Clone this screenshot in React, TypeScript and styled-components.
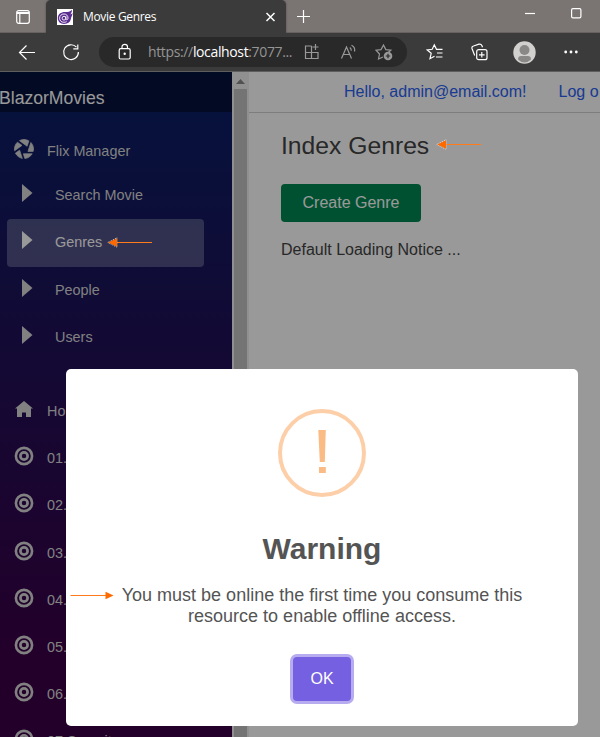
import React from "react";
import styled, { createGlobalStyle } from "styled-components";

const Global = createGlobalStyle`
  *, *::before, *::after { box-sizing: border-box; }
  body { margin: 0; overflow: hidden; font-family: "Liberation Sans", Arial, sans-serif; font-size: 16px; }
  h1, h2, p { margin: 0; font-weight: 400; }
  svg { display: block; flex: none; }
`;

const Window = styled.div`
  width: 600px;
  height: 737px;
  display: flex;
  flex-direction: column;
  overflow: hidden;
`;

const TitleBar = styled.header`
  height: 33px;
  flex: none;
  display: flex;
  background: #7a7473;
  border-bottom: 1px solid #676160;
`;

const TabMenu = styled.div`
  width: 46px;
  padding: 10px 0 0 16px;
`;

const Tab = styled.div`
  width: 240px;
  height: 33px;
  padding: 1px 8px 0 11px;
  display: flex;
  align-items: center;
  background: #3b3b3b;
  border-radius: 5px 5px 0 0;
  color: #fff;
  box-shadow: 0 0 2px #4a4646;
`;

const TabTitle = styled.span`
  flex: 1;
  margin-left: 10px;
  padding-bottom: 1px;
  font: 12px "Open Sans", "Noto Sans", sans-serif;
  letter-spacing: -0.33px;
`;

const NewTab = styled.div`
  padding: 10px 0 0 11px;
`;

const Controls = styled.div`
  margin-left: auto;
  padding: 8px 18px 0 0;
  display: flex;
  gap: 35px;
`;

const Toolbar = styled.div`
  height: 39px;
  flex: none;
  display: flex;
  align-items: center;
  padding-left: 18px;
  background: #3b3b3b;
  border-bottom: 1px solid #5e5e5e;
  color: #fff;
`;

const ToolIcon = styled.div<{ $gap: number }>`
  margin-left: ${(p) => p.$gap}px;
`;

const AddressBar = styled.div`
  width: 308px;
  height: 30px;
  margin-left: 19px;
  padding-left: 19px;
  display: flex;
  align-items: center;
  border-radius: 15px;
  background: #292929;
  color: #999;
`;

const Url = styled.span`
  width: 147px;
  margin-left: 16px;
  padding-bottom: 1px;
  font: 14px "Open Sans", "Noto Sans", sans-serif;
  letter-spacing: -0.36px;
  white-space: nowrap;
  color: #959595;
  b { font-weight: 400; color: #fff; }
`;

const Page = styled.div`
  position: relative;
  height: 665px;
  display: flex;
  background: #fff;
  overflow: hidden;
`;

const Sidebar = styled.aside`
  width: 232px;
  flex: none;
  overflow: hidden;
  background: linear-gradient(180deg, rgb(8, 32, 103) 0%, #3a0047 88%);
  color: #d7d7d7;
  font-size: 14.4px;
`;

const Brand = styled.div`
  height: 40px;
  padding-top: 16px;
  text-indent: -1px;
  background: rgba(0, 0, 0, 0.4);
  color: #fff;
  font-size: 17.6px;
  line-height: 20px;
`;

const NavGroup = styled.nav<{ $top: number }>`
  padding: ${(p) => p.$top}px 28px 0 7px;
`;

const NavItem = styled.a<{ $height?: number; $nested?: boolean; $active?: boolean }>`
  height: ${(p) => p.$height ?? 47}px;
  padding-left: ${(p) => (p.$nested ? 15 : 7)}px;
  padding-bottom: ${(p) => (p.$nested ? 2 : 0)}px;
  display: flex;
  align-items: center;
  white-space: nowrap;
  border-radius: 4px;
  color: ${(p) => (p.$active ? "#fff" : "#d7d7d7")};
  background: ${(p) => (p.$active ? "rgba(255,255,255,0.25)" : "transparent")};
  svg { margin-right: ${(p) => (p.$nested ? 22 : 13)}px; margin-top: -4px; }
`;

const ScrollTrack = styled.div`
  width: 17px;
  flex: none;
  display: flex;
  flex-direction: column;
  align-items: center;
  background: #f1f1f1;
  svg { margin: 7px 0 5px; }
`;

const Thumb = styled.div`
  width: 13px;
  flex: 1;
  background: #c1c1c1;
`;

const Main = styled.main`
  flex: 1;
  min-width: 0;
  overflow: hidden;
  color: #444;
`;

const TopRow = styled.div`
  height: 41px;
  padding-left: 95px;
  display: flex;
  align-items: center;
  gap: 32px;
  white-space: nowrap;
  border-bottom: 1px solid #d0d0d0;
  color: #2a62f4;
`;

const Content = styled.section`
  padding: 18px 0 0 32px;
`;

const Heading = styled.h1`
  font-size: 24.7px;
  line-height: 30px;
`;

const CreateButton = styled.button`
  width: 140px;
  height: 38px;
  display: block;
  margin: 23px 0 19px;
  border: 0;
  border-radius: 4px;
  background: #008852;
  color: #fff;
  font: inherit;
`;

const Backdrop = styled.div`
  position: absolute;
  inset: 0;
  background: rgba(0, 0, 0, 0.4);
`;

const Dialog = styled.div`
  position: absolute;
  left: 66px;
  top: 297px;
  width: 512px;
  height: 357px;
  padding-top: 40px;
  display: flex;
  flex-direction: column;
  align-items: center;
  border-radius: 5px;
  background: #fff;
  color: #545454;
  text-align: center;
`;

const DialogTitle = styled.h2`
  margin-top: 34px;
  font-size: 30px;
  font-weight: 700;
  line-height: 36px;
`;

const DialogText = styled.p`
  width: 430px;
  margin-top: 18px;
  font-size: 18px;
  line-height: 21px;
`;

const OkButton = styled.button`
  width: 58px;
  height: 44px;
  margin-top: 30px;
  padding: 0;
  border: 0;
  border-radius: 4px;
  background: #7460e0;
  box-shadow: 0 0 0 3px #b7acef;
  color: #fff;
  font: 16px "Liberation Sans", Arial, sans-serif;
`;

const Pointer = styled.div<{ $x: number; $y: number }>`
  position: absolute;
  left: ${(p) => p.$x}px;
  top: ${(p) => p.$y}px;
`;

const line = { fill: "none", stroke: "currentColor", strokeWidth: 1.2 } as const;

const LeftArrow = () => (
  <svg width="46" height="12" viewBox="0 0 46 12">
    <path d="M9 5.5H45" stroke="#ff7a1a" strokeWidth="1" />
    <path d="M.8 5.500L10 .800v9.400z" fill="none" stroke="#fff" strokeWidth=".8" strokeDasharray="1 1" />
    <path d="M1.200 5.500L10 1.200v8.600z" fill="#ff6a00" />
  </svg>
);
const RightArrow = () => (
  <svg width="44" height="10" viewBox="0 0 44 10">
    <path d="M0.500 4.500H36" stroke="#ff7a1a" strokeWidth="1" />
    <path d="M35.500 .7v7.600L43.500 4.500z" fill="#ff6a00" />
  </svg>
);
const Caret = () => (
  <svg width="11" height="18" viewBox="0 0 11 18"><path d="M0 0L10.500 9L0 18z" fill="currentColor" /></svg>
);
const Target = () => (
  <svg width="20" height="20" viewBox="0 0 20 20" fill="none" stroke="currentColor">
    <circle cx="10" cy="10" r="8.1" strokeWidth="2.600" /><circle cx="10" cy="10" r="3.600" strokeWidth="2.700" />
  </svg>
);
const HomeIcon = () => (
  <svg width="20" height="20" viewBox="0 0 20 20">
    <path d="M10 2L1 9.500h2V18h5v-4.500h4V18h5V9.500h2z" fill="currentColor" />
  </svg>
);
const Aperture = () => (
  <svg width="20" height="20" viewBox="-0.200 -0.200 8.400 8.400">
    <path fill="currentColor" stroke="currentColor" strokeWidth=".3" d="M4 0c-.69 0-1.34.19-1.91.5l3.22 2.34.75-2.25c-.6-.36-1.31-.59-2.06-.59zm-2.75 1.13c-.76.73-1.25 1.74-1.25 2.88 0 .25.02.48.06.72l3.09-2.22-1.91-1.38zm5.63.13l-1.22 3.75h2.19c.08-.32.16-.65.16-1 0-1.07-.44-2.03-1.13-2.75zm-4.72 3.22l-1.75 1.25c.55 1.13 1.6 1.99 2.88 2.22l-1.13-3.47zm1.56 1.53l.63 1.97c1.33-.12 2.46-.88 3.09-1.97h-3.72z" />
  </svg>
);

const Favicon = () => (
  <svg width="16" height="16" viewBox="0 0 16 16">
    <path fill="#fff" d="M0 0h16v16H0z" />
    <path fill="#5c2d91" d="M15 .7C13 3 11 3.1 8 3.1 3.8 3.1.8 5.3.8 9.2c0 3.5 2.8 5.7 6.2 5.7 4.2 0 6.4-2.2 6.9-5.2.5-2.7 1.8-3.2 1.5-6-.6 1.1-1.2 1.4-2 1.6 1-1.5 1.6-2.6 1.6-4.6z" />
    <g fill="none" stroke="#fff" strokeWidth=".9">
      <circle cx="7" cy="9.2" r="1.9" />
      <path d="M8.9 7.2v2.7c0 1.5 2.1 1 2.1-.8 0-2.5-1.7-4.1-4-4.1S2.6 6.700 2.600 9.200s1.900 4.100 4.300 4.100c1.200 0 2-.3 2.700-.7" />
    </g>
  </svg>
);

const pages = [
  { name: "01. Overview" },
  { name: "02. Install", height: 48 },
  { name: "03. Basics" },
  { name: "04. Routing" },
  { name: "05. Forms" },
  { name: "06. Storage" },
  { name: "07.Security" },
];

export default function App() {
  return (
    <Window>
      <Global />
      <TitleBar>
        <TabMenu>
          <svg width="14" height="14" viewBox="0 0 14 14" {...line} color="#fff">
            <rect x=".7" y=".7" width="12.600" height="12.600" rx="2" /><path d="M1 3h12" strokeWidth="2" /><path d="M3.800 4v9" />
          </svg>
        </TabMenu>
        <Tab>
          <Favicon />
          <TabTitle>Movie Genres</TabTitle>
          <svg width="16" height="16" viewBox="0 0 16 16" {...line} strokeWidth={1.5}><path d="M4.500 4l8 8M12.500 4l-8 8" /></svg>
        </Tab>
        <NewTab>
          <svg width="14" height="14" viewBox="0 0 14 14" {...line} color="#fff"><path d="M6.500 0v13M0 6.500h13" /></svg>
        </NewTab>
        <Controls>
          <svg width="11" height="11" viewBox="0 0 11 11" {...line} color="#fff"><path d="M0 5.500h10" /></svg>
          <svg width="11" height="11" viewBox="0 0 11 11" {...line} color="#fff"><rect x=".6" y=".6" width="9.300" height="9.300" rx="1.300" /></svg>
        </Controls>
      </TitleBar>
      <Toolbar>
        <svg width="18" height="18" viewBox="0 0 18 18" {...line}><path d="M17 9.500H1.500M8.500 2.500l-7 7 7 7" /></svg>
        <ToolIcon $gap={26}>
          <svg width="18" height="18" viewBox="0 0 18 18" {...line}><path d="M16.400 9A7.400 7.400 0 1 1 14.500 4.200M15.800 1.500v4.300h-4.500" /></svg>
        </ToolIcon>
        <AddressBar>
          <svg width="14" height="18" viewBox="0 0 14 18" {...line} color="#fff">
            <rect x="1.200" y="5.700" width="11" height="10.300" rx="1.500" /><path d="M4 5.500V4c0-3.500 5.500-3.500 5.500 0v1.500" /><circle cx="6.700" cy="10.800" r=".6" />
          </svg>
          <Url>https://<b>localhost</b>:7077...</Url>
          <ToolIcon $gap={9}>
            <svg width="16" height="16" viewBox="0 0 16 16" {...line}><path d="M7.500 2H1.500v12.500H14V8.500H1.500M7.500 2v12.500M11.500 0v6M8.500 3h6" /></svg>
          </ToolIcon>
          <ToolIcon $gap={20}>
            <svg width="17" height="17" viewBox="0 0 17 17" {...line}><path d="M1.500 14.500L6.500 3l5 11.500M3.500 10.500h6M9.800 3.500q1.600 1.200 1.500 3.300M11.500 1.300q4 2 3 6.200" /></svg>
          </ToolIcon>
          <ToolIcon $gap={18}>
            <svg width="18" height="18" viewBox="0 0 18 18" {...line}>
              <path d="M8 14l-4.500 2 1-5L1 7.200l5-.6L8.500 2l2.300 4.600 5 .6-2.300 2" /><circle cx="13" cy="13" r="4.300" fill="currentColor" stroke="none" /><path d="M13 10.800v4.400M10.800 13h4.400" stroke="#292929" />
            </svg>
          </ToolIcon>
        </AddressBar>
        <ToolIcon $gap={19}>
          <svg width="18" height="18" viewBox="0 0 18 18" {...line}><path d="M8.500 13.200l-4.500 2.500 1.200-5.400L1.200 6.900l5-.6L8.300 1.800l2.200 4.500h6M11 10h5.500M10 14h6.500" /></svg>
        </ToolIcon>
        <ToolIcon $gap={27}>
          <svg width="17" height="18" viewBox="0 0 17 18" {...line}><rect x="5.700" y="6.700" width="10.300" height="10" rx="2" /><path d="M10.800 9v5.600M8 11.800h5.600M3.700 12.500L1 5.500Q.5 3.500 2.500 3L8 1.200q2-.5 3 1.500l.5 1.500" /></svg>
        </ToolIcon>
        <ToolIcon $gap={25}>
          <svg width="23" height="23" viewBox="0 0 23 23">
            <circle cx="11.500" cy="11.500" r="11.200" fill="#d2d0ce" /><circle cx="11.500" cy="9" r="5" fill="#8a8886" /><path d="M5 18.500c0-2.700 1.500-3.500 3-3.500h7c1.500 0 3 .8 3 3.500q-3 3-6.500 3T5 18.500z" fill="#8a8886" />
          </svg>
        </ToolIcon>
        <ToolIcon $gap={28}>
          <svg width="14" height="4" viewBox="0 0 14 4" fill="currentColor"><circle cx="1.700" cy="2" r="1.400" /><circle cx="7" cy="2" r="1.400" /><circle cx="12.300" cy="2" r="1.400" /></svg>
        </ToolIcon>
      </Toolbar>
      <Page>
        <Sidebar>
          <Brand>BlazorMovies</Brand>
          <NavGroup $top={18}>
            <NavItem $height={42}><Aperture />Flix Manager</NavItem>
            <NavItem $nested $height={47}><Caret />Search Movie</NavItem>
            <NavItem $nested $active $height={48}><Caret />Genres</NavItem>
            <NavItem $nested $height={47}><Caret />People</NavItem>
            <NavItem $nested $height={47}><Caret />Users</NavItem>
          </NavGroup>
          <NavGroup $top={26}>
            <NavItem><HomeIcon />Home</NavItem>
            {pages.map((page) => (
              <NavItem key={page.name} $height={page.height}><Target />{page.name}</NavItem>
            ))}
          </NavGroup>
        </Sidebar>
        <ScrollTrack>
          <svg width="9" height="5" viewBox="0 0 9 5"><path d="M0 5L4.500 0 9 5z" fill="#888" /></svg>
          <Thumb />
        </ScrollTrack>
        <Main>
          <TopRow><span>Hello, admin@email.com!</span><span>Log o</span></TopRow>
          <Content>
            <Heading>Index Genres</Heading>
            <CreateButton>Create Genre</CreateButton>
            <p>Default Loading Notice ...</p>
          </Content>
        </Main>
        <Backdrop />
        <Dialog>
          <svg width="88" height="88" viewBox="0 0 88 88">
            <circle cx="44" cy="44" r="42" fill="none" stroke="#fdcfa9" strokeWidth="4" />
            <path d="M40.300 21h7.500l-1 32h-5zM41 58h6.800v6H41z" fill="#fbbb85" />
          </svg>
          <DialogTitle>Warning</DialogTitle>
          <DialogText>You must be online the first time you consume this resource to enable offline access.</DialogText>
          <OkButton>OK</OkButton>
        </Dialog>
        <Pointer $x={107} $y={165}><LeftArrow /></Pointer>
        <Pointer $x={436} $y={67}><LeftArrow /></Pointer>
        <Pointer $x={70} $y={519}><RightArrow /></Pointer>
      </Page>
    </Window>
  );
}
